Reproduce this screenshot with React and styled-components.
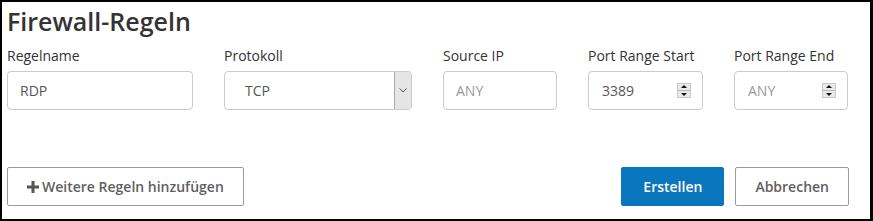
import styled, { createGlobalStyle } from "styled-components";

const GlobalStyle = createGlobalStyle`
  body {
    margin: 0;
    font-family: "Open Sans", "Liberation Sans", sans-serif;
    background: #fff;
  }
`;

const Frame = styled.section`
  box-sizing: border-box;
  width: 873px;
  height: 221px;
  border: 2px solid #000;
  border-right-width: 3px;
  padding: 0 21px 13px 5px;
  display: flex;
  flex-direction: column;
`;

const Title = styled.h1`
  margin: 4px 0 0 0;
  font-size: 25px;
  font-weight: 600;
  line-height: 30px;
  color: #333;
`;

const FieldRow = styled.div`
  display: flex;
  gap: 31px;
  margin-top: 10px;
`;

const Field = styled.div`
  display: flex;
  flex-direction: column;
  width: ${(p) => p.width}px;
`;

const Label = styled.label`
  font-size: 14px;
  line-height: 19px;
  color: #333;
  margin-bottom: 6px;
`;

const Box = styled.div`
  box-sizing: border-box;
  height: 39px;
  border: 1px solid #ccc;
  border-radius: 4px;
  display: flex;
  align-items: center;
  padding-left: ${(p) => p.pad || 12}px;
  padding-right: 11px;
  font-size: 14px;
  color: ${(p) => (p.placeholder ? "#999" : "#555")};
`;

const Value = styled.span`
  flex: 1;
`;

const SelectBox = styled(Box)`
  padding-right: 0;
  overflow: hidden;
`;

const Caret = styled.div`
  width: 16px;
  align-self: stretch;
  background: #e5e5e5;
  border-left: 1px solid #a8a8a8;
  display: flex;
  align-items: center;
  justify-content: center;
`;

const Spinner = styled.div`
  box-sizing: border-box;
  width: 14px;
  height: 15px;
  border: 1px solid #c8c8c8;
  background: #e9e9e9;
  display: flex;
  flex-direction: column;
  align-items: center;
  justify-content: space-around;
`;

const Tri = styled.span`
  width: 0;
  height: 0;
  border-left: 3px solid transparent;
  border-right: 3px solid transparent;
  ${(p) =>
    p.up ? "border-bottom: 3px solid #111;" : "border-top: 3px solid #111;"}
`;

const SpinLine = styled.span`
  width: 100%;
  height: 1px;
  background: #bbb;
`;

const ButtonRow = styled.div`
  margin-top: auto;
  display: flex;
  align-items: center;
  justify-content: space-between;
`;

const Actions = styled.div`
  display: flex;
  gap: 11px;
`;

const Button = styled.button`
  box-sizing: border-box;
  height: 39px;
  font-family: inherit;
  font-size: 14px;
  font-weight: 600;
  border-radius: 2px;
  cursor: pointer;
  padding: 0 ${(p) => p.px || 16}px;
  background: ${(p) => (p.primary ? "#0a76bd" : "#fff")};
  color: ${(p) => (p.primary ? "#fff" : "#5f5f5f")};
  border: 1px solid ${(p) => (p.primary ? "#0a76bd" : "#9a9a9a")};
  display: flex;
  align-items: center;
  gap: 3px;
`;

const Plus = () => (
  <svg width="12" height="12" viewBox="0 0 12 12">
    <path d="M4.5 0h3v4.5H12v3H7.5V12h-3V7.5H0v-3h4.5z" fill="#555" />
  </svg>
);

const Chevron = () => (
  <svg width="8" height="5" viewBox="0 0 8 5">
    <path d="M0.5 0.5L4 4L7.5 0.5" fill="none" stroke="#555" strokeWidth="1" />
  </svg>
);

const NumberSpin = () => (
  <Spinner>
    <Tri up />
    <SpinLine />
    <Tri />
  </Spinner>
);

export default function App() {
  return (
    <>
      <GlobalStyle />
      <Frame>
        <Title>Firewall-Regeln</Title>
        <FieldRow>
          <Field width={186}>
            <Label>Regelname</Label>
            <Box>
              <Value>RDP</Value>
            </Box>
          </Field>
          <Field width={188}>
            <Label>Protokoll</Label>
            <SelectBox pad={20}>
              <Value>TCP</Value>
              <Caret>
                <Chevron />
              </Caret>
            </SelectBox>
          </Field>
          <Field width={114}>
            <Label>Source IP</Label>
            <Box pad={12} placeholder="1">
              <Value>ANY</Value>
            </Box>
          </Field>
          <Field width={115}>
            <Label>Port Range Start</Label>
            <Box pad={13}>
              <Value>3389</Value>
              <NumberSpin />
            </Box>
          </Field>
          <Field width={114}>
            <Label>Port Range End</Label>
            <Box pad={13} placeholder="1">
              <Value>ANY</Value>
              <NumberSpin />
            </Box>
          </Field>
        </FieldRow>
        <ButtonRow>
          <Button px={19}>
            <Plus />
            Weitere Regeln hinzufügen
          </Button>
          <Actions>
            <Button primary px={21}>
              Erstellen
            </Button>
            <Button px={19}>Abbrechen</Button>
          </Actions>
        </ButtonRow>
      </Frame>
    </>
  );
}
